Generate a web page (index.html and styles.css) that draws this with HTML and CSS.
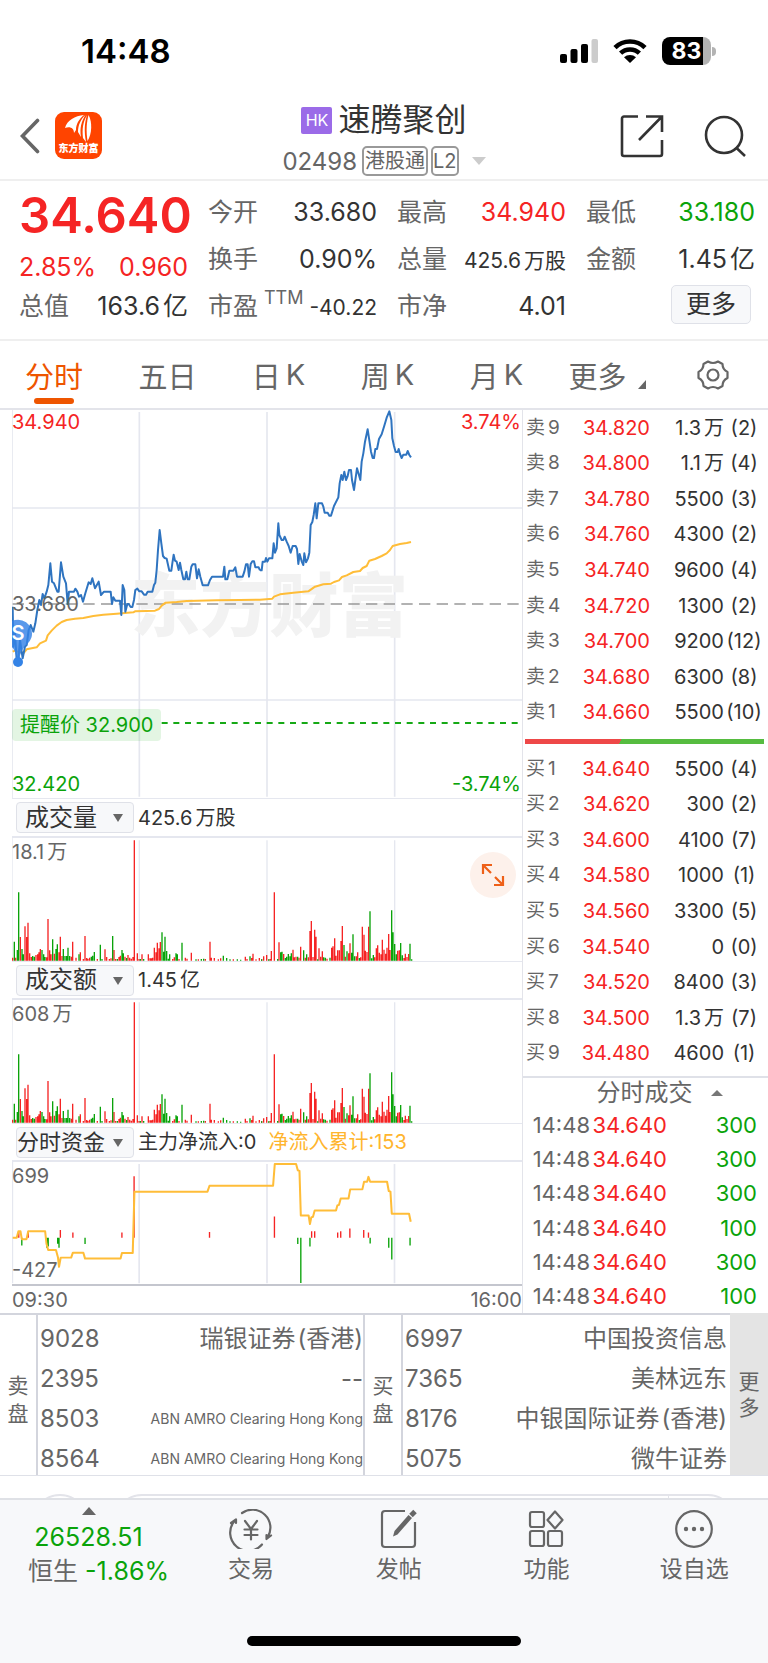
FILE: index.html
```html
<!DOCTYPE html>
<html lang="zh-CN">
<head>
<meta charset="utf-8">
<meta name="viewport" content="width=device-width, initial-scale=1">
<title>速腾聚创 02498</title>
<link rel="stylesheet" href="styles.css">
</head>
<body>
<div class="app">
  <div class="status">
    <span class="clock">14:48</span>
    <div class="status-icons">
      <svg class="signal" viewBox="0 0 38 24" aria-hidden="true"><rect x="0" y="15" width="7" height="9" rx="2"/><rect x="10.500" y="10" width="7" height="14" rx="2"/><rect x="21" y="5" width="7" height="19" rx="2"/><rect x="31.500" y="0" width="6.500" height="24" rx="2" fill="#ccc"/></svg>
      <svg class="wifi" viewBox="0 0 34 24" aria-hidden="true"><g fill="none" stroke="#000" stroke-width="4.600"><path d="M2 8.600a21.500 21.500 0 0 1 30 0"/><path d="M7.600 14.200a13.600 13.600 0 0 1 18.800 0"/></g><path d="M11 18.300a9 9 0 0 1 12 0l-6 5.700z"/></svg>
      <span class="battery"><span class="battery-body">83</span><span class="battery-cap"></span></span>
    </div>
  </div>

  <header class="header">
    <div class="header-side">
      <button class="icon-btn" aria-label="返回"><svg width="20" height="36" viewBox="0 0 20 36" fill="none" stroke="#666" stroke-width="3.600" stroke-linecap="round"><path d="M17.500 2.500L2.500 18l15 15.500"/></svg></button>
      <a class="logo" href="#"><svg width="30" height="27" viewBox="0 0 30 27" fill="#fff" aria-hidden="true"><path d="M1 13C3 5 11 1 20 0C15 4 12 9 12 15L10 18C10 13 6 11 1 13z"/><path d="M21.500 0C17 4 14 10 14 17L17 22C15.500 13 17.500 6 21.500 0z"/><path d="M23 0C19 7 18 14 19 23L22 27C20 16 20.500 8 23 0z"/><path d="M24.500 0C22.500 8 22 16 23.500 26C28 19 28.500 7 24.500 0z"/></svg><span>东方财富</span></a>
    </div>
    <div class="header-main">
      <div class="title-row"><span class="hk">HK</span><h1>速腾聚创</h1></div>
      <button class="code-row"><span>02498</span><span class="tag">港股通</span><span class="tag">L2</span><svg width="14" height="8" viewBox="0 0 14 8" fill="#ccc"><path d="M0 0h14L7 8z"/></svg></button>
    </div>
    <div class="header-side header-tools">
      <button class="icon-btn" aria-label="分享"><svg width="44" height="44" viewBox="0 0 44 44" fill="none" stroke="#333" stroke-width="2.600"><path d="M18 2.500H4a2 2 0 0 0-2 2V40a2 2 0 0 0 2 2H40a2 2 0 0 0 2-2V26"/><path d="M26 2.500H42V18M41 3.500L19 26"/></svg></button>
      <button class="icon-btn" aria-label="搜索"><svg width="44" height="44" viewBox="0 0 44 44" fill="none" stroke="#333" stroke-width="2.600"><circle cx="20" cy="21" r="18"/><path d="M32 33.500l9 8.500"/></svg></button>
    </div>
  </header>

  <section class="quote">
    <div class="quote-col price-col">
      <strong class="price">34.640</strong>
      <div class="item up"><span>2.85%</span><span>0.960</span></div>
      <div class="item"><label>总值</label><span>163.6<i>亿</i></span></div>
    </div>
    <div class="quote-col">
      <div class="item"><label>今开</label><span>33.680</span></div>
      <div class="item"><label>换手</label><span>0.90%</span></div>
      <div class="item"><label>市盈</label><sup>TTM</sup><span class="small">-40.22</span></div>
    </div>
    <div class="quote-col">
      <div class="item"><label>最高</label><span class="up">34.940</span></div>
      <div class="item"><label>总量</label><span class="small">425.6<i>万股</i></span></div>
      <div class="item"><label>市净</label><span>4.01</span></div>
    </div>
    <div class="quote-col">
      <div class="item"><label>最低</label><span class="down">33.180</span></div>
      <div class="item"><label>金额</label><span>1.45<i>亿</i></span></div>
      <div class="item item-more"><button class="more-btn">更多</button></div>
    </div>
  </section>

  <nav class="tabs">
    <button class="tab active">分时</button>
    <button class="tab">五日</button>
    <button class="tab">日<i>K</i></button>
    <button class="tab">周<i>K</i></button>
    <button class="tab">月<i>K</i></button>
    <button class="tab tab-more">更多<svg width="8" height="9" viewBox="0 0 8 9" fill="#666"><path d="M8 0V9H0z"/></svg></button>
    <button class="tab" aria-label="设置"><svg width="34" height="32" viewBox="0 0 34 32" fill="none" stroke="#666" stroke-width="2.200" stroke-linejoin="round"><path d="M12 2.500Q17 5.500 22 2.500L26.500 5Q26.500 10.500 31.500 13V19Q26.500 21.500 26.500 27L22 29.500Q17 26.500 12 29.500L7.500 27Q7.500 21.500 2.500 19V13Q7.500 10.500 7.500 5z"/><circle cx="17" cy="16" r="5.500"/></svg></button>
  </nav>

  <main class="main">
    <div class="charts">
      <div class="plot">
        <svg class="price-svg" viewBox="36 30 1530 1164" aria-label="分时走势">
          <g class="grid"><path d="M418 36V1190M801 36V1190M1184 36V1190M36 324H1566M36 900H1566M36 30V1194"/></g>
          <text class="watermark" x="392" y="694">东方财富</text>
          <path class="mid" d="M38 612H1566"/>
          <path class="alert-line" d="M485 969H1566"/>
          <polyline class="avg" points="38,755 45,752 60,757 72,758 80,748 95,745 110,742 120,730 138,722 143,706 155,692 170,677 185,666 200,660 225,656 250,654 280,648 310,644 350,641 400,637 405,634 440,633 465,632 477,627 485,617 497,608 530,606 560,603 650,601 720,600 780,599"/>
          <polyline class="avg" transform="translate(780 0)" points="0,599 37,596 42,590 60,583 100,578 145,574 165,560 190,553 213,551 222,546 237,541 246,531 260,526 280,516 300,513 308,504 320,498 328,482 345,477 365,468 380,460 390,450 398,438 420,432 440,429 453,426"/>
          <polyline class="line" points="38,620 40,740 45,700 50,780 54,790 60,720 68,775 75,740 80,735 86,690 92,675 100,695 106,670 112,630 118,600 123,615 128,582 133,595 140,575 145,555 151,490 156,545 162,550 172,575 176,575 183,487 190,530 198,550 203,612 207,575 222,575 226,566 232,575 237,590 243,585 249,605 256,580 266,547 272,552 277,535 285,565 296,545 303,585 312,575 332,575 336,612 340,592 346,602 360,602 364,645 368,555 373,570 376,635 382,612 386,612 392,621 397,621 402,600 406,570 412,566 418,574 425,574 432,584 438,584 443,575 457,575 462,555 466,548 470,510 474,450 479,390 484,430 489,468 494,474 500,476 508,512 514,512 517,490 521,464 525,482 530,485 536,510 540,488 544,510 550,538 555,538 559,515 563,538 568,538 574,500 578,493 586,493 591,535 596,508 601,530 608,556 624,556 630,540 636,530 669,530 673,500 676,538 682,538 688,512 700,512 706,502 711,530 728,530 733,515 738,493 743,493 747,530 752,492 757,484 762,484 766,502 776,502 780,511"/>
          <polyline class="line" transform="translate(780 0)" points="0,511 5,511 8,485 15,485 18,474 22,485 27,475 37,475 41,430 45,458 50,445 55,370 58,405 65,420 70,420 74,410 80,425 86,438 92,458 98,438 107,438 111,447 115,492 119,462 125,484 130,495 133,460 138,487 144,475 148,458 152,375 157,366 161,345 166,310 170,355 175,310 186,310 190,320 194,338 203,338 208,347 213,347 222,318 235,292 239,250 244,225 248,240 253,215 258,240 263,228 267,210 273,210 276,240 282,270 286,240 291,205 296,222 301,240 305,185 310,160 315,125 323,88 329,128 333,155 338,174 342,174 346,147 351,147 357,117 365,103 372,80 380,53 388,34 394,60 397,115 402,138 407,156 413,156 416,147 420,162 425,174 430,164 439,164 443,153 448,165 453,172"/>
          <g fill="#3483e6"><path opacity=".82" d="M54 659A42 42 0 0 1 80 734Q62 748 58 778H50Q48 748 28 734A42 42 0 0 1 54 659z"/><circle cx="54" cy="786" r="15"/></g>
          <text class="marker" x="54" y="720" text-anchor="middle">S</text>
        </svg>
        <span class="tick tl up">34.940</span><span class="tick tr up">3.74%</span>
        <span class="tick ml">33.680</span>
        <span class="tick bl down">32.420</span><span class="tick br down">-3.74%</span>
        <span class="alert">提醒价 32.900</span>
      </div>

      <div class="bar-head bar-head-first"><span class="pick"><select aria-label="指标一"><option>成交量</option></select></span><span>425.6<i>万股</i></span></div>
      <div class="plot">
        <svg class="bars" viewBox="36 141 1530 369"><g class="grid"><path d="M418 148V509M801 148V509M1184 148V509M36 141V510"/></g><path class="up-bars"/><path class="down-bars"/></svg>
        <span class="tick tl">18.1<i>万</i></span>
        <button class="expand" aria-label="全屏"><svg width="24" height="24" viewBox="0 0 24 24" fill="none" stroke="#ee6018" stroke-width="2.200"><path d="M2 11V2H11M2.500 2.500L10 10M22 13V22H13M21.500 21.500L14 14"/></svg></button>
      </div>

      <div class="bar-head"><span class="pick"><select aria-label="指标二"><option>成交额</option></select></span><span>1.45<i>亿</i></span></div>
      <div class="plot">
        <svg class="bars" viewBox="36 141 1530 369"><g class="grid"><path d="M418 148V509M801 148V509M1184 148V509M36 141V510"/></g><path class="up-bars"/><path class="down-bars"/></svg>
        <span class="tick tl">608<i>万</i></span>
      </div>

      <div class="bar-head"><span class="pick pick-wide"><select aria-label="指标三"><option>分时资金</option></select></span><span>主力净流入:0</span><span class="gold">净流入累计:153</span></div>
      <div class="plot flow">
        <svg class="flow-svg" viewBox="36 122 1508 370" preserveAspectRatio="none">
          <g class="grid"><path d="M412 128V490M790 128V490M1167 128V490M37 122V490"/></g>
          <path class="flow-up" d="M56 352V333M84 352V333M179 352V328M216 352V336M361 352V336M397 352V165M620 352V334M812 352V287M922 352V332M931 352V332M999 352V336M1008 352V332M1035 352V324M1076 352V328M1090 352V336"/>
          <path class="flow-down" d="M65 352V375M139 352V382M143 352V378M171 352V370M175 352V382M252 352V371M881 352V371M890 352V489M917 352V378M1095 352V369M1150 352V382M1159 352V418M1213 352V375"/>
          <polyline class="avg" points="38,352 50,352 55,332 61,332 65,356 79,356 84,332 134,332 138,370 143,389 166,389 172,412 175,440 180,412 211,412 216,397 247,397 252,415 357,415 361,398 393,398 398,212 614,212 620,194 808,194 813,128 876,128 881,147 886,149 890,284 913,284 917,310 921,290 926,288 931,269 994,269 998,254 1003,252 1008,233 1031,233 1036,205 1072,205 1077,182 1086,182 1090,167 1095,182 1145,182 1150,210 1155,212 1159,279 1210,279 1215,303"/>
        </svg>
        <span class="tick tl">699</span><span class="tick bl">-427</span>
      </div>
      <div class="times"><span>09:30</span><span>16:00</span></div>
    </div>

    <aside class="depth">
      <table class="book">
        <tr><th>卖<i>9</i></th><td class="up">34.820</td><td>1.3<i>万</i></td><td>(2)</td></tr>
        <tr><th>卖<i>8</i></th><td class="up">34.800</td><td>1.1<i>万</i></td><td>(4)</td></tr>
        <tr><th>卖<i>7</i></th><td class="up">34.780</td><td>5500</td><td>(3)</td></tr>
        <tr><th>卖<i>6</i></th><td class="up">34.760</td><td>4300</td><td>(2)</td></tr>
        <tr><th>卖<i>5</i></th><td class="up">34.740</td><td>9600</td><td>(4)</td></tr>
        <tr><th>卖<i>4</i></th><td class="up">34.720</td><td>1300</td><td>(2)</td></tr>
        <tr><th>卖<i>3</i></th><td class="up">34.700</td><td>9200</td><td>(12)</td></tr>
        <tr><th>卖<i>2</i></th><td class="up">34.680</td><td>6300</td><td>(8)</td></tr>
        <tr><th>卖<i>1</i></th><td class="up">34.660</td><td>5500</td><td>(10)</td></tr>
      </table>
      <div class="ratio"></div>
      <table class="book">
        <tr><th>买<i>1</i></th><td class="up">34.640</td><td>5500</td><td>(4)</td></tr>
        <tr><th>买<i>2</i></th><td class="up">34.620</td><td>300</td><td>(2)</td></tr>
        <tr><th>买<i>3</i></th><td class="up">34.600</td><td>4100</td><td>(7)</td></tr>
        <tr><th>买<i>4</i></th><td class="up">34.580</td><td>1000</td><td>(1)</td></tr>
        <tr><th>买<i>5</i></th><td class="up">34.560</td><td>3300</td><td>(5)</td></tr>
        <tr><th>买<i>6</i></th><td class="up">34.540</td><td>0</td><td>(0)</td></tr>
        <tr><th>买<i>7</i></th><td class="up">34.520</td><td>8400</td><td>(3)</td></tr>
        <tr><th>买<i>8</i></th><td class="up">34.500</td><td>1.3<i>万</i></td><td>(7)</td></tr>
        <tr><th>买<i>9</i></th><td class="up">34.480</td><td>4600</td><td>(1)</td></tr>
      </table>
      <button class="deals-head">分时成交<svg width="12" height="6" viewBox="0 0 12 6" fill="#777"><path d="M0 6h12L6 0z"/></svg></button>
      <table class="deals">
        <tr><td>14:48</td><td class="up">34.640</td><td class="down">300</td></tr>
        <tr><td>14:48</td><td class="up">34.640</td><td class="down">300</td></tr>
        <tr><td>14:48</td><td class="up">34.640</td><td class="down">300</td></tr>
        <tr><td>14:48</td><td class="up">34.640</td><td class="down">100</td></tr>
        <tr><td>14:48</td><td class="up">34.640</td><td class="down">300</td></tr>
        <tr><td>14:48</td><td class="up">34.640</td><td class="down">100</td></tr>
      </table>
    </aside>
  </main>

  <section class="brokers">
    <div class="side-name">卖盘</div>
    <table class="broker-list">
      <tr><td>9028</td><td>瑞银证券<i>(香港)</i></td></tr>
      <tr><td>2395</td><td>--</td></tr>
      <tr><td>8503</td><td class="latin">ABN AMRO Clearing Hong Kong</td></tr>
      <tr><td>8564</td><td class="latin">ABN AMRO Clearing Hong Kong</td></tr>
    </table>
    <div class="side-name">买盘</div>
    <table class="broker-list broker-buy">
      <tr><td>6997</td><td>中国投资信息</td></tr>
      <tr><td>7365</td><td>美林远东</td></tr>
      <tr><td>8176</td><td>中银国际证券<i>(香港)</i></td></tr>
      <tr><td>5075</td><td>微牛证券</td></tr>
    </table>
    <button class="side-name side-more">更多</button>
  </section>

  <div class="peek"><span class="peek-dot"></span><span class="peek-bar"><span></span></span></div>

  <footer class="footer">
    <nav class="actions">
      <a class="index" href="#">
        <svg width="14" height="8" viewBox="0 0 14 8" fill="#666"><path d="M0 8h14L7 0z"/></svg>
        <span class="down">26528.51</span>
        <span class="index-name">恒生 <b class="down">-1.86%</b></span>
      </a>
      <a class="action" href="#"><svg width="44" height="40" viewBox="0 0 44 40" fill="none" stroke="#666" stroke-width="2.200" stroke-linecap="round" stroke-linejoin="round"><path d="M13 4A18 18 0 0 1 38.500 28.500M42 26.500L37.500 30V26"/><path d="M33 35.500A18 18 0 0 1 5.500 12M2 14L7 10.500V14"/><path d="M16 12l6 8l6-8M15.500 20.500h13M15.500 26h13M22 20v10.500"/></svg><span>交易</span></a>
      <a class="action" href="#"><svg width="44" height="40" viewBox="0 0 44 40" fill="none" stroke="#666" stroke-width="2.200"><path d="M28 2H8a3 3 0 0 0-3 3V35a3 3 0 0 0 3 3H35a3 3 0 0 0 3-3V13"/><path fill="#666" stroke="none" d="M31.500 6l3.500 3L20.500 25.500l-4.500 2L17.500 22z"/><path stroke-width="5" d="M34 6.500L38 2.500"/></svg><span>发帖</span></a>
      <a class="action" href="#"><svg width="44" height="40" viewBox="0 0 44 40" fill="none" stroke="#666" stroke-width="2.200"><rect x="6" y="3" width="14" height="15" rx="2"/><rect x="6" y="22" width="14" height="15" rx="2"/><rect x="24" y="22" width="14" height="15" rx="2"/><path stroke-linejoin="round" d="M31 2.500l7.500 8.500l-7.500 8.500l-7.500-8.500z"/></svg><span>功能</span></a>
      <a class="action" href="#"><svg width="44" height="40" viewBox="0 0 44 40" fill="none" stroke="#666" stroke-width="2.200"><circle cx="22" cy="20" r="17.800"/><g fill="#666" stroke="none"><circle cx="14" cy="20" r="2.200"/><circle cx="22" cy="20" r="2.200"/><circle cx="30" cy="20" r="2.200"/></g></svg><span>设自选</span></a>
    </nav>
    <div class="home"></div>
  </footer>
</div>
<script src="bars.js"></script>
</body>
</html>
```

FILE: styles.css
```css
* { box-sizing: border-box; }
body { margin: 0; background: #fff; color: #333; font-family: Inter, "Noto Sans CJK SC", sans-serif; }
button, select { font: inherit; color: inherit; border: 0; background: none; padding: 0; margin: 0; }
a { color: inherit; text-decoration: none; }
i { font-style: normal; margin-left: 3px; }
svg { display: block; flex: none; }
table { border-collapse: collapse; table-layout: fixed; width: 100%; }
th, td { padding: 0; font-weight: 400; }
.up { color: #f52424; }
.down { color: #0aa30a; }

.status { height: 96px; padding: 6px 52px 0 81px; display: flex; align-items: center; justify-content: space-between; color: #000; }
.clock { font-size: 33px; font-weight: 600; }
.status-icons { display: flex; align-items: center; gap: 15px; }
.signal { width: 38px; height: 24px; }
.wifi { width: 34px; height: 24px; }
.battery { display: flex; align-items: center; gap: 1px; }
.battery-body { width: 49px; height: 28px; border-radius: 8px; background: linear-gradient(90deg, #000 83%, #b3b3b3 83%); color: #fff; font-size: 23px; font-weight: 700; line-height: 28px; text-align: center; }
.battery-cap { width: 4px; height: 9px; border-radius: 0 4px 4px 0; background: #b3b3b3; }

.header { height: 85px; padding: 0 20px; display: grid; grid-template-columns: 1fr auto 1fr; border-bottom: 2px solid #efefef; }
.header-side { display: flex; align-items: center; gap: 15px; margin-top: -4px; }
.header-tools { justify-content: flex-end; gap: 40px; }
.logo { width: 47px; height: 47px; border-radius: 9px; background: #ff4400; display: flex; flex-direction: column; align-items: center; padding-top: 3px; color: #fff; font-size: 10px; line-height: 12px; font-family: "Noto Sans CJK SC", sans-serif; font-weight: 900; white-space: nowrap; }
.header-main { display: flex; flex-direction: column; align-items: center; padding-top: 4px; }
.title-row { display: flex; align-items: center; gap: 6px; height: 40px; }
.title-row h1 { margin: 0; font-size: 32px; line-height: 40px; font-weight: 400; }
.hk { width: 31px; height: 27px; border-radius: 2px; background: #9b6be8; color: #fff; font-size: 16px; line-height: 27px; text-align: center; }
.code-row { display: flex; align-items: center; gap: 5px; height: 38px; padding-top: 4px; color: #666; font-size: 24px; }
.tag { height: 30px; padding: 0 1px; border: 2px solid #999; border-radius: 5px; font-size: 20px; line-height: 26px; }
.code-row .tag + .tag { margin-left: -2px; padding: 0; }
.code-row svg { margin-left: 8px; }

.quote { height: 160px; padding: 7px 13px 0 19px; display: grid; grid-template-columns: repeat(4, minmax(0, 1fr)); gap: 20px; border-bottom: 2px solid #efefef; }
.quote-col { display: flex; flex-direction: column; }
.item { height: 47px; display: flex; align-items: center; justify-content: space-between; font-size: 25px; line-height: 36px; white-space: nowrap; }
.item label { color: #666; }
.item .small { font-size: 21px; padding-top: 4px; }
.item sup { color: #666; font-size: 18px; align-self: flex-start; line-height: 32px; }
.price { height: 59px; font-size: 49px; line-height: 56px; font-weight: 600; color: #f52424; }
.price-col .item { height: 39px; }
.item-more { justify-content: flex-end; padding: 0 4px 2px 0; }
.more-btn { width: 80px; height: 39px; border: 1px solid #dfe1e8; border-radius: 5px; background: #f7f8fa; line-height: 35px; }

.tabs { height: 69px; padding: 0 38px 0 25px; display: flex; justify-content: space-between; border-bottom: 2px solid #e3e4ea; color: #666; font-size: 29px; }
.tab { position: relative; display: flex; align-items: center; white-space: nowrap; }
.tab i { margin-left: 5px; }
.active { color: #ee5500; }
.active::after { content: ""; position: absolute; left: 9px; right: 9px; bottom: 4px; height: 6px; border-radius: 3px; background: #ee5500; }
.tab-more { gap: 11px; margin: 0 -5px 0 -10px; }
.tab-more svg { align-self: flex-end; margin-bottom: 19px; }

.main { display: grid; grid-template-columns: minmax(0, 1fr) 246px; }
.charts { padding-left: 12px; }
.plot { position: relative; }
.plot svg { width: 100%; height: auto; }
.grid path { fill: none; stroke: #e5e7ef; stroke-width: 5; }
.watermark { font: 900 208px "Noto Sans CJK SC", sans-serif; fill: #f2f2f2; }
.mid { stroke: #999; stroke-width: 5; stroke-dasharray: 34 19; }
.alert-line { stroke: #16a916; stroke-width: 6; stroke-dasharray: 18 17; }
.line { fill: none; stroke: #2f74c0; stroke-width: 6; stroke-linejoin: round; }
.avg { fill: none; stroke: #ffbd38; stroke-width: 6; stroke-linejoin: round; }
.marker { font: 600 60px Inter, sans-serif; fill: #fff; }
.tick { position: absolute; color: #666; font-size: 20px; line-height: 24px; }
.tick.up { color: #f52424; }
.tick.down { color: #0aa30a; }
.tl { left: 0; top: 2px; }
.tr { right: 1px; top: 0; }
.tl.up { top: 0; }
.ml { left: 0; top: 50%; transform: translateY(-50%); }
.bl { left: 0; bottom: 2px; }
.br { right: 1px; bottom: 2px; }
.alert { position: absolute; left: 0; top: 77%; height: 32px; padding: 0 8px; border-radius: 4px; background: rgba(22, 169, 22, .12); color: #0aa30a; font-size: 20px; line-height: 32px; }
.bar-head { height: 39px; padding: 0 4px; display: flex; align-items: center; gap: 4px; border-top: 1px solid #e5e7ef; border-bottom: 2px solid #e5e7ef; font-size: 20px; line-height: 30px; white-space: nowrap; }
.bar-head-first { height: 40px; }
.gold { color: #ffb52e; margin-left: 8px; }
.pick { position: relative; width: 118px; height: 31px; }
.pick select { appearance: none; width: 100%; height: 100%; padding: 0 0 0 8px; border: 1px solid #dfe1e8; border-radius: 4px; background: #f7f8fa; font-size: 24px; line-height: 28px; }
.pick-wide select { padding-left: 0; font-size: 22px; }
.pick::after { content: ""; position: absolute; right: 11px; top: 12px; border: 5px solid transparent; border-top: 8px solid #666; border-bottom: 0; pointer-events: none; }
.bars path { fill: none; stroke-width: 4; }
.bars .up-bars { stroke: #f52424; }
.bars .down-bars { stroke: #0aa30a; }
.expand { position: absolute; right: 6px; top: 14px; width: 46px; height: 46px; border-radius: 50%; background: #fdf1eb; display: grid; place-items: center; }
.plot .expand svg { width: 24px; height: 24px; }
.flow { border-bottom: 2px solid #c4c6ce; }
.plot .flow-svg { height: 122px; }
.flow-up { stroke: #f52424; stroke-width: 4; }
.flow-down { stroke: #0aa30a; stroke-width: 4; }
.times { height: 27px; display: flex; align-items: center; justify-content: space-between; color: #666; font-size: 20px; line-height: 24px; }

.depth { display: flex; flex-direction: column; border-left: 1px solid #e3e4ea; }
.book { height: 320px; font-size: 20px; line-height: 24px; }
.book th { width: 40px; padding-left: 3px; text-align: left; color: #666; font-size: 19px; white-space: nowrap; }
.book td { text-align: right; white-space: nowrap; }
.book td:nth-child(3) { width: 74px; }
.book td:nth-child(4) { width: 44px; padding-right: 4px; text-align: center; }
.ratio { height: 5px; margin: 9px 4px 7px 2px; background: linear-gradient(115deg, #ee4848 40%, #56bc40 40%); }
.deals-head { height: 32px; margin-top: 5px; border-top: 2px solid #dfe1e8; display: flex; align-items: center; justify-content: center; gap: 18px; color: #666; font-size: 24px; line-height: 28px; padding-left: 28px; }
.deals { height: 205px; font-size: 22px; line-height: 28px; color: #666; }
.deals td { text-align: right; white-space: nowrap; }
.deals td:first-child { width: 67px; }
.deals td:nth-child(2) { width: 77px; }
.deals td:last-child { padding-right: 11px; }

.brokers { display: grid; grid-template-columns: 36px 1fr 36px 1fr 38px; border-bottom: 1px solid #dfe1e8; color: #666; }
.side-name { display: flex; align-items: center; justify-content: center; padding: 10px 7px 0; font-size: 21px; line-height: 28px; border-top: 2px solid #d3d5dd; text-align: center; word-break: break-all; }
.side-more { padding: 0 8px; background: #e4e4e4; border-color: #e4e4e4; line-height: 26px; }
.broker-list { border: 2px solid #d3d5dd; border-bottom: 0; border-collapse: separate; border-spacing: 0; }
.broker-list td { height: 40px; padding-top: 8px; font-size: 24px; line-height: 32px; text-align: right; white-space: nowrap; }
.broker-list td:first-child { width: 62px; padding-left: 2px; text-align: left; }
.broker-list .latin { font-size: 14px; }
.broker-list i { margin-left: 2px; }
.broker-buy { border-right: 0; }
.broker-buy td:last-child { padding-right: 3px; }

.peek { height: 22px; padding: 18px 32px 0; display: flex; gap: 26px; overflow: hidden; }
.peek-dot { width: 56px; height: 56px; flex: none; border: 2px solid #e3e4ea; border-radius: 50%; }
.peek-bar { flex: 1; height: 56px; border: 2px solid #e3e4ea; border-radius: 28px; display: flex; justify-content: flex-end; }
.peek-bar span { width: 66px; border-left: 1px solid #e3e4ea; }

.footer { background: #f7f8fa; border-top: 2px solid #dfe1e6; padding-bottom: 17px; color: #666; }
.actions { height: 136px; display: grid; grid-template-columns: 177px repeat(4, 1fr); }
.index { display: flex; flex-direction: column; align-items: center; padding-top: 7px; font-size: 25px; line-height: 34px; white-space: nowrap; }
.index svg { margin-bottom: 5px; }
.index-name { padding-left: 20px; }
.index b { font-weight: 400; }
.action { display: flex; flex-direction: column; align-items: center; padding-top: 9px; gap: 3px; font-size: 23px; line-height: 34px; }
.home { width: 274px; height: 10px; margin: 0 auto; border-radius: 5px; background: #000; }
```

FILE: bars.js
```js
// Minute bars: "x top colour", r = rising, g = falling; the base line is at 509.
const morning = "38 500r 43 452g 47 500r 52 477g 56 304g 61 438r 66 474g 70 490g 75 406r 80 438r 84 395r 89 487r 94 498r 98 495g 103 497g 108 492r 113 490r 117 484r 121 474r 126 477g 131 490g 135 498g 140 499r 144 384r 149 478r 153 490r 158 445g 163 488r 168 474g 172 460g 177 484r 181 437r 186 495r 190 474g 195 495g 200 495g 204 470g 209 495g 214 497r 218 452r 228 500r 237 490g 241 484r 250 504r 255 435r 260 501r 264 503r 269 500r 274 497g 278 494g 283 483g 292 504r 301 461g 306 504g 315 475r 320 498r 328 504r 333 502r 338 435g 342 477r 347 504r 352 504g 357 498r 361 494r 366 477g 370 487g 375 497r 380 501g 384 492r 389 500r 394 503r 399 498r 403 148r 412 487r 417 504r 421 504g 426 490r 431 504g 445 490r 450 502r 454 502r 458 500r 463 470r 468 484r 472 455r 477 472r 481 453r 486 424g 491 482g 495 437g 500 480g 505 503g 509 490g 518 504r 523 499r 528 487g 532 490g 537 504r 546 455g 556 500r 561 503r 574 485r 588 505g 595 505r 604 504g 611 503g 616 504r 630 452r 634 500r 643 501r 655 505r 662 502r 670 494g 680 501g 690 505g 700 505r 712 505g 722 506g 736 497r 741 504r 750 496g 755 501r 759 488r 768 505r 778 501r 785 505g";
const afternoon = "5 505r 11 496r 20 492r 26 505g 30 504r 34 480r 43 304r 53 504g 57 454r 62 484g 66 482g 71 489r 76 501g 80 497g 85 489g 90 496g 94 487g 99 476r 103 499r 108 497r 113 497g 117 500r 122 467r 131 478g 136 500r 140 490g 145 499r 150 420r 154 390r 159 498r 164 416r 168 437r 173 505g 177 472r 182 497r 187 481r 191 499g 196 500g 201 503r 210 500g 215 470r 219 466r 224 442r 228 494r 233 478r 238 478r 243 450r 247 405r 252 462g 256 497r 261 481g 266 487r 270 457r 275 485g 279 430g 284 496g 289 496r 293 484r 298 501g 302 499r 307 407r 312 431r 316 479r 321 483r 326 407r 330 361g 335 502g 340 492g 344 499r 349 472r 353 463r 358 485r 363 490r 367 446r 372 476r 377 488r 381 470r 386 429r 390 477r 395 358g 399 424g 404 459g 409 490g 413 479r 418 478r 422 456g 427 493g 432 501r 436 488r 441 498r 446 489r 450 458g 455 505g";

const paths = { r: "", g: "" };
function add(text, shift) {
  for (const [, x, top, colour] of text.matchAll(/(\d+) (\d+)([rg])/g)) {
    paths[colour] += `M${Number(x) + shift} 509V${top}`;
  }
}
add(morning, 0);
add(afternoon, 780);
document.querySelectorAll(".up-bars").forEach(p => p.setAttribute("d", paths.r));
document.querySelectorAll(".down-bars").forEach(p => p.setAttribute("d", paths.g));
```
